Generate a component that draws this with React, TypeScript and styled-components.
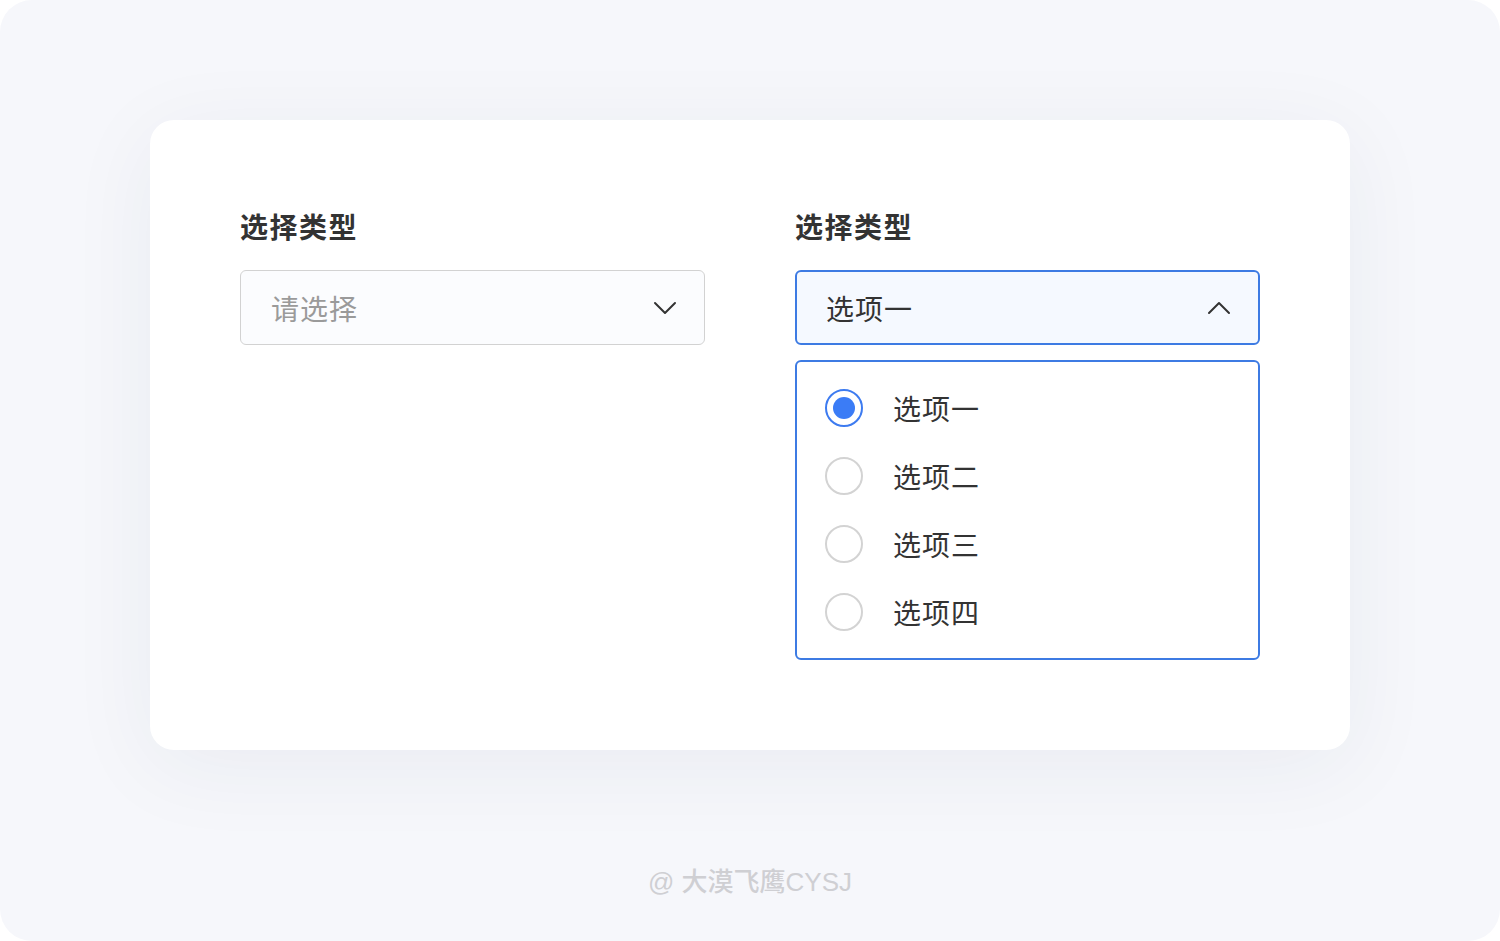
import React, { useState } from 'react';
import styled, { createGlobalStyle } from 'styled-components';

const GlobalStyle = createGlobalStyle`
  html, body {
    margin: 0;
    padding: 0;
    background: #ffffff;
  }
  body {
    font-family: 'Noto Sans CJK SC', 'Noto Sans', sans-serif;
  }
`;

const Frame = styled.div`
  width: 1500px;
  height: 941px;
  background: #f6f7fb;
  border-radius: 32px;
  overflow: hidden;
  display: flex;
  flex-direction: column;
  align-items: center;
`;

const Card = styled.div`
  margin-top: 120px;
  width: 1200px;
  box-sizing: border-box;
  padding: 90px 90px 90px;
  background: #ffffff;
  border-radius: 24px;
  box-shadow: 0 16px 90px rgba(40, 50, 90, 0.06);
  display: grid;
  grid-template-columns: 465px 465px;
  column-gap: 90px;
  align-items: start;
`;

const Field = styled.div`
  display: flex;
  flex-direction: column;
`;

const Label = styled.div`
  font-size: 28px;
  line-height: 32px;
  font-weight: 700;
  color: #333333;
  letter-spacing: 1.5px;
  margin-bottom: 28px;
`;

const Trigger = styled.div<{ $open?: boolean }>`
  height: 75px;
  box-sizing: border-box;
  display: flex;
  align-items: center;
  justify-content: space-between;
  padding: 0 27px 0 ${p => (p.$open ? 29 : 30)}px;
  border: ${p => (p.$open ? '2px solid #3d7be3' : '1px solid #d2d2d2')};
  border-radius: 6px;
  background: ${p => (p.$open ? '#f5f9ff' : '#fbfcfe')};
  cursor: pointer;
`;

const Value = styled.span<{ $placeholder?: boolean }>`
  font-size: 28px;
  letter-spacing: 1px;
  color: ${p => (p.$placeholder ? '#9a9a9a' : '#333333')};
`;

const Chevron = styled.svg`
  width: 24px;
  height: 14px;
  flex: none;
`;

const Menu = styled.div`
  margin-top: 15px;
  box-sizing: border-box;
  border: 2px solid #3d7be3;
  border-radius: 6px;
  padding: 12px 0;
  background: #ffffff;
`;

const Option = styled.div`
  height: 68px;
  display: flex;
  align-items: center;
  padding-left: 28px;
  gap: 30px;
  cursor: pointer;
`;

const Radio = styled.span<{ $checked?: boolean }>`
  width: 38px;
  height: 38px;
  box-sizing: border-box;
  border-radius: 50%;
  border: 2px solid ${p => (p.$checked ? '#3d7bf0' : '#d3d3d3')};
  display: flex;
  align-items: center;
  justify-content: center;
  flex: none;

  &::after {
    content: '';
    width: 22px;
    height: 22px;
    border-radius: 50%;
    background: #3b7cf6;
    display: ${p => (p.$checked ? 'block' : 'none')};
  }
`;

const OptionText = styled.span`
  font-size: 28px;
  letter-spacing: 1px;
  color: #333333;
`;

const Watermark = styled.div`
  margin-top: 117px;
  font-family: 'Liberation Sans', 'Noto Sans CJK SC', sans-serif;
  font-size: 26px;
  line-height: 30px;
  font-weight: 500;
  color: #cfcfd3;
`;

const options = ['选项一', '选项二', '选项三', '选项四'];

const ChevronDown = () => (
  <Chevron viewBox="0 0 24 14">
    <path d="M2 2 L12 12 L22 2" fill="none" stroke="#333" strokeWidth="2" strokeLinecap="round" strokeLinejoin="round" />
  </Chevron>
);

const ChevronUp = () => (
  <Chevron viewBox="0 0 24 14">
    <path d="M2 12 L12 2 L22 12" fill="none" stroke="#333" strokeWidth="2" strokeLinecap="round" strokeLinejoin="round" />
  </Chevron>
);

const App: React.FC = () => {
  const [selected, setSelected] = useState(0);

  return (
    <Frame>
      <GlobalStyle />
      <Card>
        <Field>
          <Label>选择类型</Label>
          <Trigger>
            <Value $placeholder>请选择</Value>
            <ChevronDown />
          </Trigger>
        </Field>

        <Field>
          <Label>选择类型</Label>
          <Trigger $open>
            <Value>{options[selected]}</Value>
            <ChevronUp />
          </Trigger>
          <Menu>
            {options.map((opt, i) => (
              <Option key={opt} onClick={() => setSelected(i)}>
                <Radio $checked={i === selected} />
                <OptionText>{opt}</OptionText>
              </Option>
            ))}
          </Menu>
        </Field>
      </Card>
      <Watermark>@ 大漠飞鹰CYSJ</Watermark>
    </Frame>
  );
};

export default App;
